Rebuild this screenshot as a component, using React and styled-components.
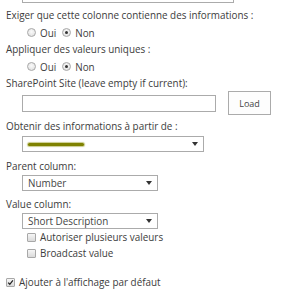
import React from "react";
import styled, { createGlobalStyle } from "styled-components";

const GlobalStyle = createGlobalStyle`
  html, body {
    margin: 0;
    padding: 0;
    background: #ffffff;
  }
  body {
    font-family: "Open Sans", "Noto Sans", sans-serif;
    font-size: 9.9px;
    color: #3c3c3c;
  }
`;

const Page = styled.div`
  width: 300px;
  height: 302px;
  overflow: hidden;
  padding: 0 0 0 6px;
  box-sizing: border-box;
`;

const TopBox = styled.div`
  margin-left: 16px;
  width: 210px;
  height: 2px;
  border: 1px solid #ababab;
  border-top: none;
  background: #fff;
`;

const Label = styled.div`
  height: 17px;
  line-height: 17px;
  margin-top: ${props => props.$top || 0}px;
  white-space: nowrap;
`;

const Indented = styled.div`
  padding-left: ${props => props.$indent ?? 16}px;
  margin-top: ${props => props.$top || 0}px;
  display: flex;
  align-items: center;
  gap: ${props => props.$gap || 0}px;
`;

const OptionRow = styled.div`
  display: flex;
  align-items: center;
  height: 17px;
  gap: 6px;
`;

const Option = styled.label`
  display: flex;
  align-items: center;
  gap: 4px;
  white-space: nowrap;
`;

const RadioDot = styled.span`
  width: 9px;
  height: 9px;
  border-radius: 50%;
  box-sizing: border-box;
  border: 1px solid #a8a8a8;
  background: radial-gradient(circle at 50% 40%, #fafafa, #dcdcdc);
  display: inline-flex;
  align-items: center;
  justify-content: center;
  &::after {
    content: "";
    width: 3px;
    height: 3px;
    border-radius: 50%;
    background: ${props => (props.$checked ? "#333" : "transparent")};
  }
`;

const TextInput = styled.div`
  width: 194px;
  height: 17px;
  box-sizing: border-box;
  border: 1px solid #ababab;
  background: #fff;
`;

const Button = styled.div`
  width: 43px;
  height: 24px;
  box-sizing: border-box;
  border: 1px solid #ababab;
  background: #fdfdfd;
  display: flex;
  align-items: center;
  justify-content: center;
  font-size: 9px;
  color: #444;
`;

const Select = styled.div`
  width: ${props => props.$width}px;
  height: 16px;
  box-sizing: border-box;
  border: 1px solid #ababab;
  background: #fff;
  display: flex;
  align-items: center;
  justify-content: space-between;
  padding: 0 5px 0 5px;
  color: #444;
`;

const Arrow = styled.span`
  width: 0;
  height: 0;
  border-left: 3px solid transparent;
  border-right: 3px solid transparent;
  border-top: 4px solid #333;
`;

const Scribble = styled.span`
  display: block;
  width: 56px;
  height: 3px;
  border-radius: 2px;
  background: #7f8200;
  box-shadow: 0 0 1px 1px rgba(138, 141, 0, 0.45);
`;

const CheckRow = styled.label`
  display: flex;
  align-items: center;
  gap: 4px;
  height: 16px;
  white-space: nowrap;
  padding-left: ${props => props.$indent || 0}px;
  margin-top: ${props => props.$top || 0}px;
`;

const Box = styled.span`
  position: relative;
  width: 9px;
  height: 9px;
  box-sizing: border-box;
  border: 1px solid #a8a8a8;
  border-radius: 1px;
  background: linear-gradient(#f6f6f6, #dadada);
  display: inline-flex;
  align-items: center;
  justify-content: center;
`;

function Radio({ checked, children }) {
  return (
    <Option>
      <RadioDot $checked={checked} />
      {children}
    </Option>
  );
}

function Checkbox({ checked, indent, top, children }) {
  return (
    <CheckRow $indent={indent} $top={top}>
      <Box>
        {checked && (
          <svg width="9" height="9" viewBox="0 0 9 9">
            <path d="M1.5 4.6 L3.6 6.8 L7.6 1.8" fill="none" stroke="#222" strokeWidth="1.6" />
          </svg>
        )}
      </Box>
      {children}
    </CheckRow>
  );
}

export default function App() {
  return (
    <Page>
      <GlobalStyle />
      <TopBox />
      <Label $top={4}>Exiger que cette colonne contienne des informations :</Label>
      <Indented $indent={21}>
        <OptionRow>
          <Radio>Oui</Radio>
          <Radio checked>Non</Radio>
        </OptionRow>
      </Indented>
      <Label>Appliquer des valeurs uniques :</Label>
      <Indented $indent={21}>
        <OptionRow>
          <Radio>Oui</Radio>
          <Radio checked>Non</Radio>
        </OptionRow>
      </Indented>
      <Label $top={0}>SharePoint Site (leave empty if current):</Label>
      <Indented $top={-1} $gap={12}>
        <TextInput />
        <Button>Load</Button>
      </Indented>
      <Label $top={3}>Obtenir des informations à partir de :</Label>
      <Indented $top={1}>
        <Select $width={182}>
          <Scribble />
          <Arrow />
        </Select>
      </Indented>
      <Label $top={6}>Parent column:</Label>
      <Indented $top={0}>
        <Select $width={136}>
          <span>Number</span>
          <Arrow />
        </Select>
      </Indented>
      <Label $top={5}>Value column:</Label>
      <Indented $top={0}>
        <Select $width={136}>
          <span>Short Description</span>
          <Arrow />
        </Select>
      </Indented>
      <Checkbox indent={21} top={0}>Autoriser plusieurs valeurs</Checkbox>
      <Checkbox indent={21}>Broadcast value</Checkbox>
      <Checkbox top={13} checked>Ajouter à l'affichage par défaut</Checkbox>
    </Page>
  );
}
